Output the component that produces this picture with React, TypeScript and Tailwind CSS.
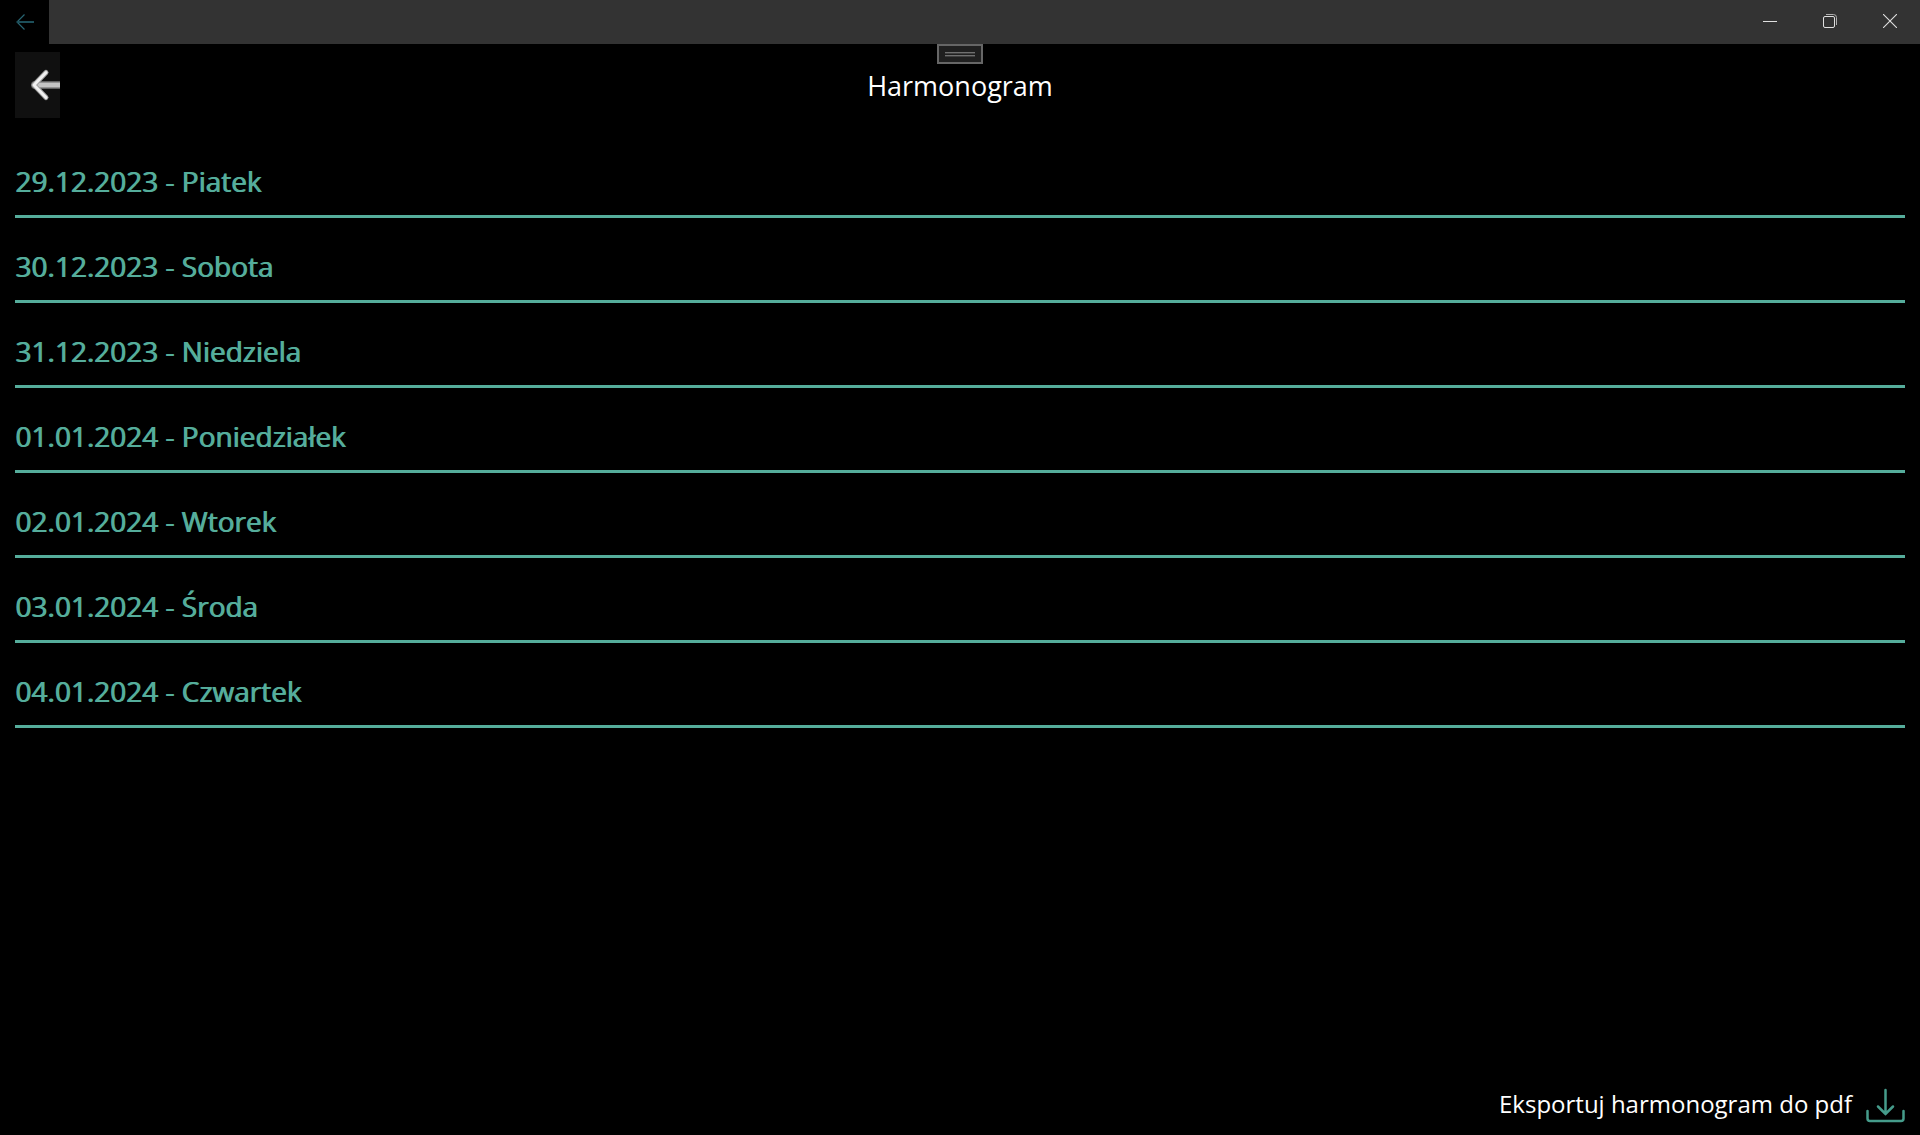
const days = [
  '29.12.2023 - Piatek',
  '30.12.2023 - Sobota',
  '31.12.2023 - Niedziela',
  '01.01.2024 - Poniedziałek',
  '02.01.2024 - Wtorek',
  '03.01.2024 - Środa',
  '04.01.2024 - Czwartek',
];

function TitleBar() {
  return (
    <header className="relative flex h-11 shrink-0 bg-[#333333] text-[#e0e0e0]">
      <button aria-label="Wstecz" className="flex w-[49px] items-center justify-center bg-black text-[#276573]">
        <svg width="18" height="16" viewBox="0 0 18 16" fill="none" stroke="currentColor">
          <path d="M8.5 .5 1 8l7.5 7.5" strokeWidth="1.2" />
          <path d="M1 8h17" strokeWidth="2" className="text-[#1d4f5a]" stroke="currentColor" />
        </svg>
      </button>
      <div className="ml-auto flex pb-0.5">
        <button aria-label="Minimalizuj" className="flex w-15 items-center justify-center">
          <svg width="14" height="14" viewBox="0 0 14 14" stroke="currentColor">
            <path d="M0 7.5h14" />
          </svg>
        </button>
        <button aria-label="Przywróć" className="flex w-15 items-center justify-center">
          <svg width="14" height="14" viewBox="0 0 14 14" fill="none" stroke="currentColor">
            <rect x=".5" y="2.5" width="11" height="11" rx="1.5" />
            <path d="M3 .5h7.5a3 3 0 0 1 3 3V11" stroke="#b0b0b0" />
          </svg>
        </button>
        <button aria-label="Zamknij" className="flex w-15 items-center justify-center">
          <svg width="14" height="14" viewBox="0 0 14 14" stroke="currentColor" strokeWidth="1.1">
            <path d="m0 0 14 14M14 0 0 14" />
          </svg>
        </button>
      </div>
      <button
        aria-label="Pasek narzędzi"
        className="absolute top-full left-1/2 flex h-5 w-[46px] -translate-x-1/2 items-center justify-center border-2 border-[#666666] bg-[#202020]"
      >
        <svg width="30" height="6" viewBox="0 0 30 6" className="shrink-0">
          <path d="M0 2h30M0 5h30" stroke="#3f3f3f" strokeWidth="2" />
          <path d="M0 1.500h30M0 4.500h30" stroke="#707070" />
        </svg>
      </button>
    </header>
  );
}

export default function App() {
  return (
    <div className="flex min-h-screen flex-col bg-black font-['Open_Sans',sans-serif] text-white">
      <TitleBar />
      <div className="grid grid-cols-[1fr_auto_1fr] items-center px-[15px] pt-2">
        <button aria-label="Powrót" className="flex h-[66px] w-[45px] items-center justify-end bg-[#101010]">
          <svg width="30" height="34" viewBox="0 0 30 34" fill="none" strokeLinecap="round">
            <path d="M5 17h27" stroke="#606060" strokeWidth="8" />
            <path d="M5 17h27" stroke="#c4c4c4" strokeWidth="5" />
            <path d="M16 4.500 4 17l12 12.500" stroke="#a0a0a0" strokeWidth="5" strokeLinejoin="round" />
            <path d="M16 4.500 4 17l12 12.500" stroke="#f0f0f0" strokeWidth="3" strokeLinejoin="round" />
          </svg>
        </button>
        <h1 className="pt-0.5 text-[27px] leading-9">Harmonogram</h1>
      </div>
      <main className="grow px-[15px] pt-[15px]">
        <ul>
          {days.map((day) => (
            <li key={day} className="border-b-3 border-[#55ad9b] pt-[31px] pb-[17px] text-[28px] leading-[34px] text-[#55ad9b] [text-shadow:1px_0_0_#55ad9b]">
              {day}
            </li>
          ))}
        </ul>
      </main>
      <footer className="flex justify-end px-[15px] pb-[7px]">
        <button className="flex items-center gap-[14px] text-2xl leading-[44px]">
          <span className="pb-0.5">Eksportuj harmonogram do pdf</span>
          <svg width="39" height="36" viewBox="0 0 39 36" fill="none" stroke="#459c8b" strokeWidth="2.500" strokeLinecap="round">
            <path d="M19.500 3v24M12 19.500l7.500 7.500 7.500-7.500" />
            <path d="M1.500 24v7.500a2.500 2.500 0 0 0 2.500 2.500h31a2.500 2.500 0 0 0 2.500-2.500V24" />
          </svg>
        </button>
      </footer>
    </div>
  );
}
